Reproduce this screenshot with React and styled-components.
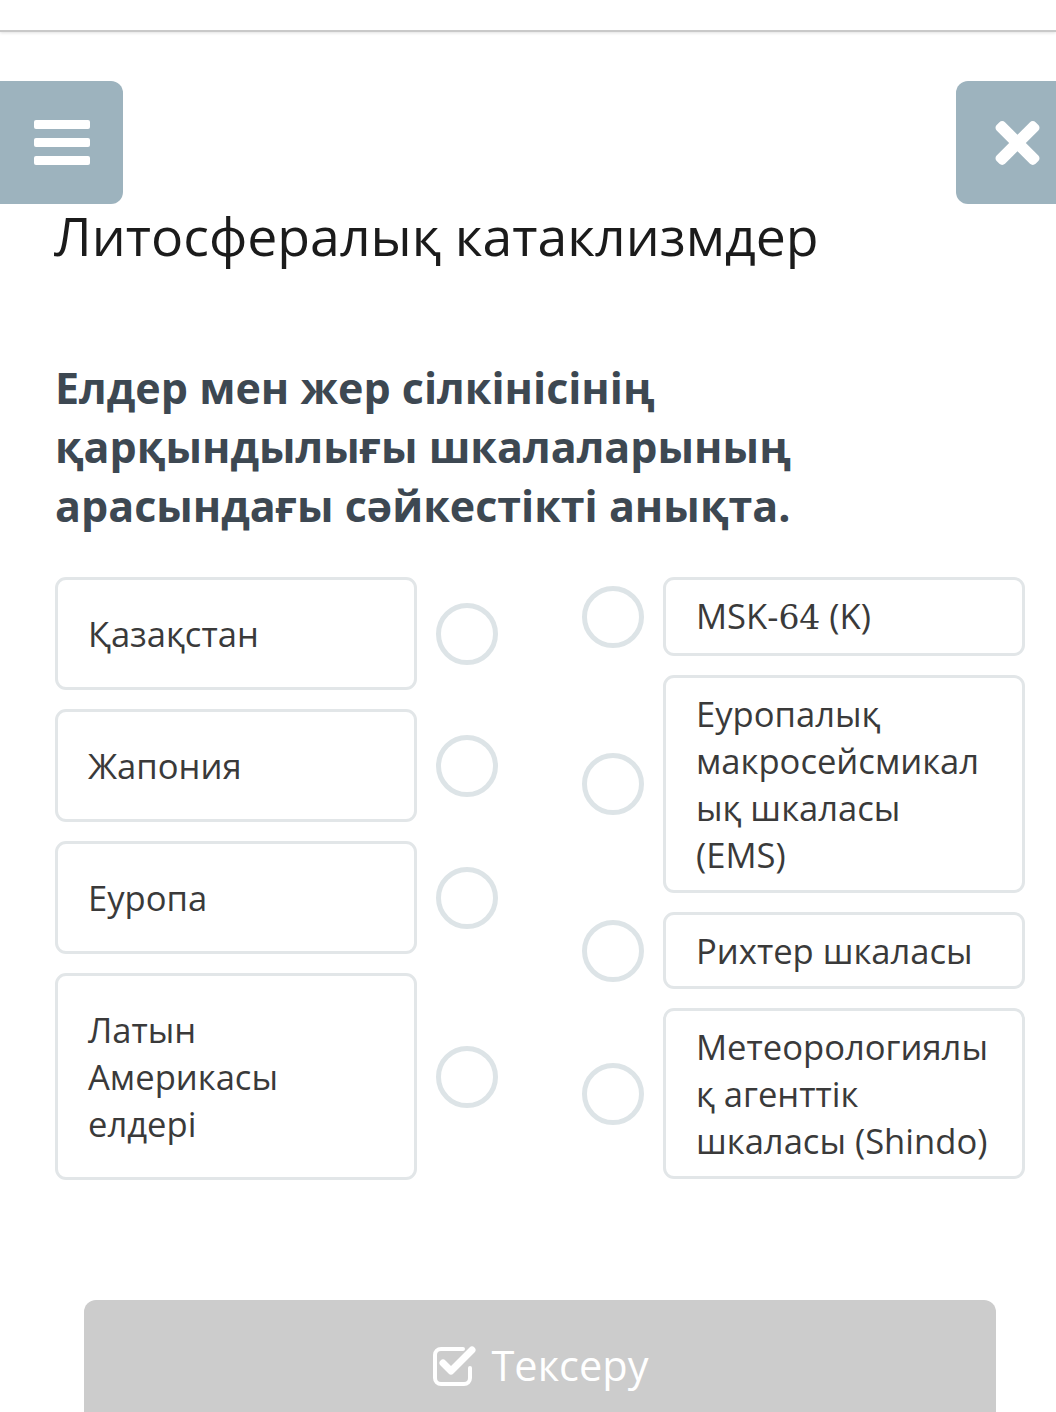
import React from 'react';
import styled, { createGlobalStyle } from 'styled-components';
import { FaTimes } from 'react-icons/fa';

const GlobalStyle = createGlobalStyle`
  html, body {
    margin: 0;
    padding: 0;
    background: #ffffff;
    overflow: hidden;
  }
  body {
    font-family: "Open Sans", "Noto Sans", sans-serif;
  }
`;

const Page = styled.div`
  width: 1056px;
  min-height: 1412px;
  overflow: hidden;
`;

const TopBar = styled.div`
  height: 30px;
  border-bottom: 2px solid #c9c9c9;
  box-shadow: 0 1px 3px rgba(0, 0, 0, 0.12);
`;

const NavRow = styled.div`
  display: flex;
  justify-content: space-between;
  margin-top: 49px;
`;

const NavButton = styled.button`
  width: 123px;
  height: 123px;
  border: none;
  padding: 0;
  background: #9db3be;
  color: #ffffff;
  display: flex;
  flex-direction: column;
  align-items: center;
  justify-content: center;
  gap: 9px;
  border-radius: ${({ $side }) => ($side === 'left' ? '0 12px 12px 0' : '12px 0 0 12px')};
  margin-right: ${({ $side }) => ($side === 'right' ? '-23px' : '0')};

  svg {
    width: 45px;
    height: 64px;
  }
`;

const Bar = styled.span`
  display: block;
  width: 56px;
  height: 9px;
  border-radius: 2px;
  background: #ffffff;
`;

const Content = styled.main`
  padding: 0 31px 0 55px;
`;

const Title = styled.h1`
  margin: 0;
  font-size: 53.6px;
  line-height: 62px;
  font-weight: 400;
  color: #1b1b1b;
  margin-top: 1px;
  margin-left: -1px;
`;

const Question = styled.h2`
  margin: 91px 0 0;
  font-size: 43px;
  line-height: 59px;
  font-weight: 700;
  color: #3d4852;
`;

const MatchGrid = styled.div`
  display: grid;
  grid-template-columns: 443px 443px;
  justify-content: space-between;
  margin-top: 42px;
  align-items: start;
`;

const Column = styled.div`
  display: flex;
  flex-direction: column;
  gap: 19px;
`;

const Row = styled.div`
  display: flex;
  align-items: center;
  gap: 19px;
  flex-direction: ${({ $reverse }) => ($reverse ? 'row-reverse' : 'row')};
`;

const Card = styled.div`
  box-sizing: border-box;
  width: 362px;
  flex-shrink: 0;
  border: 3px solid #e2e6e8;
  border-radius: 11px;
  padding: ${({ $tall }) => ($tall ? '30px 26px 30px 30px' : '12px 26px 12px 30px')};
  font-size: 34.6px;
  line-height: 47px;
  color: #3a3a3a;
  background: #ffffff;
  overflow-wrap: break-word;
`;

const Serif = styled.span`
  font-family: "DejaVu Serif", "Liberation Serif", serif;
  font-size: 33px;
`;

const Dot = styled.span`
  box-sizing: border-box;
  display: block;
  width: 62px;
  height: 62px;
  border-radius: 50%;
  border: 5px solid #dde4e7;
  flex-shrink: 0;
`;

const CheckButton = styled.button`
  box-sizing: border-box;
  display: flex;
  align-items: center;
  justify-content: center;
  gap: 14px;
  width: 912px;
  height: 134px;
  margin: 120px 0 0 84px;
  border: none;
  border-radius: 12px;
  background: #cccccc;
  color: #ffffff;
  font-family: "Open Sans", "Noto Sans", sans-serif;
  font-size: 41.5px;
  padding-bottom: 6px;

  svg {
    width: 46px;
    height: 42px;
  }
`;

const CheckIcon = () => (
  <svg viewBox="0 0 46 42" fill="none" stroke="currentColor">
    <path
      d="M31 5 H9 a6 6 0 0 0 -6 6 v23 a6 6 0 0 0 6 6 h23 a6 6 0 0 0 6 -6 v-10"
      strokeWidth="4"
      strokeLinecap="round"
    />
    <path
      d="M11 19 l8 8 l21 -21"
      strokeWidth="7"
      strokeLinecap="round"
      strokeLinejoin="round"
    />
  </svg>
);

const leftItems = [
  { text: 'Қазақстан' },
  { text: 'Жапония' },
  { text: 'Еуропа' },
  { text: 'Латын Америкасы елдері' },
];

const rightItems = [
  { text: <>MSK-<Serif>64</Serif> (K)</> },
  { text: 'Еуропалық макросейсмикалық шкаласы (EMS)' },
  { text: 'Рихтер шкаласы' },
  { text: 'Метеорологиялық агенттік шкаласы (Shindo)' },
];

const App = () => {
  return (
    <Page>
      <GlobalStyle />
      <TopBar />
      <NavRow>
        <NavButton $side="left" aria-label="menu">
          <Bar />
          <Bar />
          <Bar />
        </NavButton>
        <NavButton $side="right" aria-label="close">
          <FaTimes />
        </NavButton>
      </NavRow>
      <Content>
        <Title>Литосфералық катаклизмдер</Title>
        <Question>
          Елдер мен жер сілкінісінің қарқындылығы шкалаларының арасындағы сәйкестікті анықта.
        </Question>
        <MatchGrid>
          <Column>
            {leftItems.map((item, i) => (
              <Row key={i}>
                <Card $tall>{item.text}</Card>
                <Dot />
              </Row>
            ))}
          </Column>
          <Column>
            {rightItems.map((item, i) => (
              <Row key={i} $reverse>
                <Card>{item.text}</Card>
                <Dot />
              </Row>
            ))}
          </Column>
        </MatchGrid>
      </Content>
      <CheckButton>
        <CheckIcon />
        Тексеру
      </CheckButton>
    </Page>
  );
};

export default App;
